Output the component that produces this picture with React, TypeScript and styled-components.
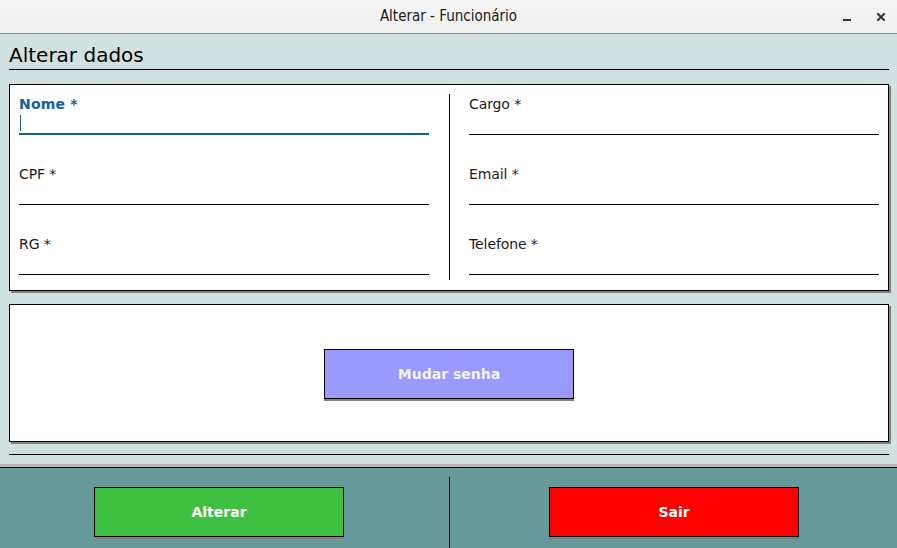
import React from "react";
import styled, { createGlobalStyle } from "styled-components";

const Global = createGlobalStyle`
  html, body { margin: 0; padding: 0; }
  body { font-family: "DejaVu Sans", "Liberation Sans", sans-serif; background: #d1e0e0; }
  * { box-sizing: border-box; }
`;

const Window = styled.div`
  width: 897px;
  height: 548px;
  display: flex;
  flex-direction: column;
  overflow: hidden;
  background: #d1e0e0;
`;

const TitleBar = styled.div`
  height: 34px;
  display: grid;
  grid-template-columns: 1fr auto 1fr;
  align-items: center;
  background: linear-gradient(#f4f4f4, #efefef);
  border-bottom: 1px solid #8f8f8f;
`;

const Title = styled.div`
  grid-column: 2;
  font-family: "DejaVu Sans Condensed", "DejaVu Sans", sans-serif;
  font-stretch: condensed;
  font-size: 15px;
  line-height: 33px;
  color: #202020;
`;

const Controls = styled.div`
  grid-column: 3;
  display: flex;
  justify-content: flex-end;
  align-items: center;
  gap: 26px;
  padding-right: 12px;
`;

const Main = styled.div`
  height: 433px;
  padding: 0 8px 9px 9px;
  display: flex;
  flex-direction: column;
  border-bottom: 3px solid #b4b4b4;
`;

const Heading = styled.h1`
  margin: 0;
  padding-top: 9px;
  height: 36px;
  font-size: 20px;
  line-height: 24px;
  font-weight: normal;
  color: #000;
  border-bottom: 1px solid #000;
`;

const Panel = styled.div<{ $h: number; $mt: number }>`
  margin-top: ${(p) => p.$mt}px;
  height: ${(p) => p.$h}px;
  background: #fff;
  border: 1px solid #000;
  box-shadow: 2px 2px 0 #808080;
`;

const FieldsPanel = styled(Panel)`
  display: flex;
  padding: 9px 8px 10px 9px;
`;

const Column = styled.div`
  width: 410px;
  display: flex;
  flex-direction: column;
  gap: 29px;
  padding-bottom: 5px;
`;

const VDivider = styled.div`
  width: 1px;
  background: #000;
  margin: 0 19px 0 20px;
`;

const Field = styled.div`
  height: 41px;
  padding-top: 2px;
  display: flex;
  flex-direction: column;
`;

const Label = styled.div<{ $focus?: boolean }>`
  font-size: 14px;
  line-height: 17px;
  height: 17px;
  color: ${(p) => (p.$focus ? "#15609c" : "#1a1a1a")};
  font-weight: ${(p) => (p.$focus ? "bold" : "normal")};
  letter-spacing: ${(p) => (p.$focus ? "0.2px" : "-0.1px")};
`;

const InputArea = styled.div<{ $focus?: boolean }>`
  flex: 1;
  border-bottom: ${(p) => (p.$focus ? "2px solid #15609c" : "1px solid #000")};
  padding-top: 2px;
  padding-left: 1px;
`;

const Caret = styled.span`
  display: block;
  width: 1px;
  height: 16px;
  background: #15609c;
`;

const ButtonPanel = styled(Panel)`
  display: flex;
  justify-content: center;
  align-items: center;
  padding-top: 1px;
`;

const ActionButton = styled.button<{ $bg: string; $fg?: string }>`
  width: 250px;
  height: 50px;
  border: 1px solid #000;
  background: ${(p) => p.$bg};
  color: ${(p) => p.$fg || "#fff"};
  font-family: "DejaVu Sans", sans-serif;
  font-weight: bold;
  font-size: 14px;
  box-shadow: 0 2px 0 #808080;
  padding: 0;
  cursor: pointer;
`;

const HRule = styled.div`
  margin-top: 12px;
  height: 1px;
  background: #000;
`;

const Footer = styled.div`
  flex: 1;
  display: flex;
  background: #669999;
  border-top: 1px solid #000;
`;

const FooterSide = styled.div<{ $w?: number; $pl?: number; $pr?: number }>`
  ${(p) => (p.$w ? `width: ${p.$w}px;` : "flex: 1;")}
  display: flex;
  justify-content: center;
  align-items: flex-start;
  padding-top: 19px;
  padding-left: ${(p) => p.$pl || 0}px;
  padding-right: ${(p) => p.$pr || 0}px;
`;

const FooterDivider = styled.div`
  width: 1px;
  margin-top: 9px;
  background: #000;
`;

const MinIcon = () => (
  <svg width="8" height="12" viewBox="0 0 8 12">
    <rect x="0" y="8" width="8" height="2" fill="#2e3436" />
  </svg>
);

const CloseIcon = () => (
  <svg width="8" height="8" viewBox="0 0 8 8">
    <path d="M1 1 L7 7 M7 1 L1 7" stroke="#2e3436" strokeWidth="2" strokeLinecap="square" />
  </svg>
);

const left = [
  { label: "Nome *", focus: true },
  { label: "CPF *" },
  { label: "RG *" },
];
const right = [{ label: "Cargo *" }, { label: "Email *" }, { label: "Telefone *" }];

const FieldItem = ({ label, focus }: { label: string; focus?: boolean }) => (
  <Field>
    <Label $focus={focus}>{label}</Label>
    <InputArea $focus={focus}>{focus && <Caret />}</InputArea>
  </Field>
);

export default function App() {
  return (
    <Window>
      <Global />
      <TitleBar>
        <Title>Alterar - Funcionário</Title>
        <Controls>
          <MinIcon />
          <CloseIcon />
        </Controls>
      </TitleBar>
      <Main>
        <Heading>Alterar dados</Heading>
        <FieldsPanel $h={207} $mt={14}>
          <Column>
            {left.map((f) => (
              <FieldItem key={f.label} {...f} />
            ))}
          </Column>
          <VDivider />
          <Column>
            {right.map((f) => (
              <FieldItem key={f.label} {...f} />
            ))}
          </Column>
        </FieldsPanel>
        <ButtonPanel $h={138} $mt={13}>
          <ActionButton $bg="#9999ff" $fg="#f4f4ff">Mudar senha</ActionButton>
        </ButtonPanel>
        <HRule />
      </Main>
      <Footer>
        <FooterSide $w={449} $pr={11}>
          <ActionButton $bg="#40c040">Alterar</ActionButton>
        </FooterSide>
        <FooterDivider />
        <FooterSide $pl={1}>
          <ActionButton $bg="#ff0000">Sair</ActionButton>
        </FooterSide>
      </Footer>
    </Window>
  );
}
